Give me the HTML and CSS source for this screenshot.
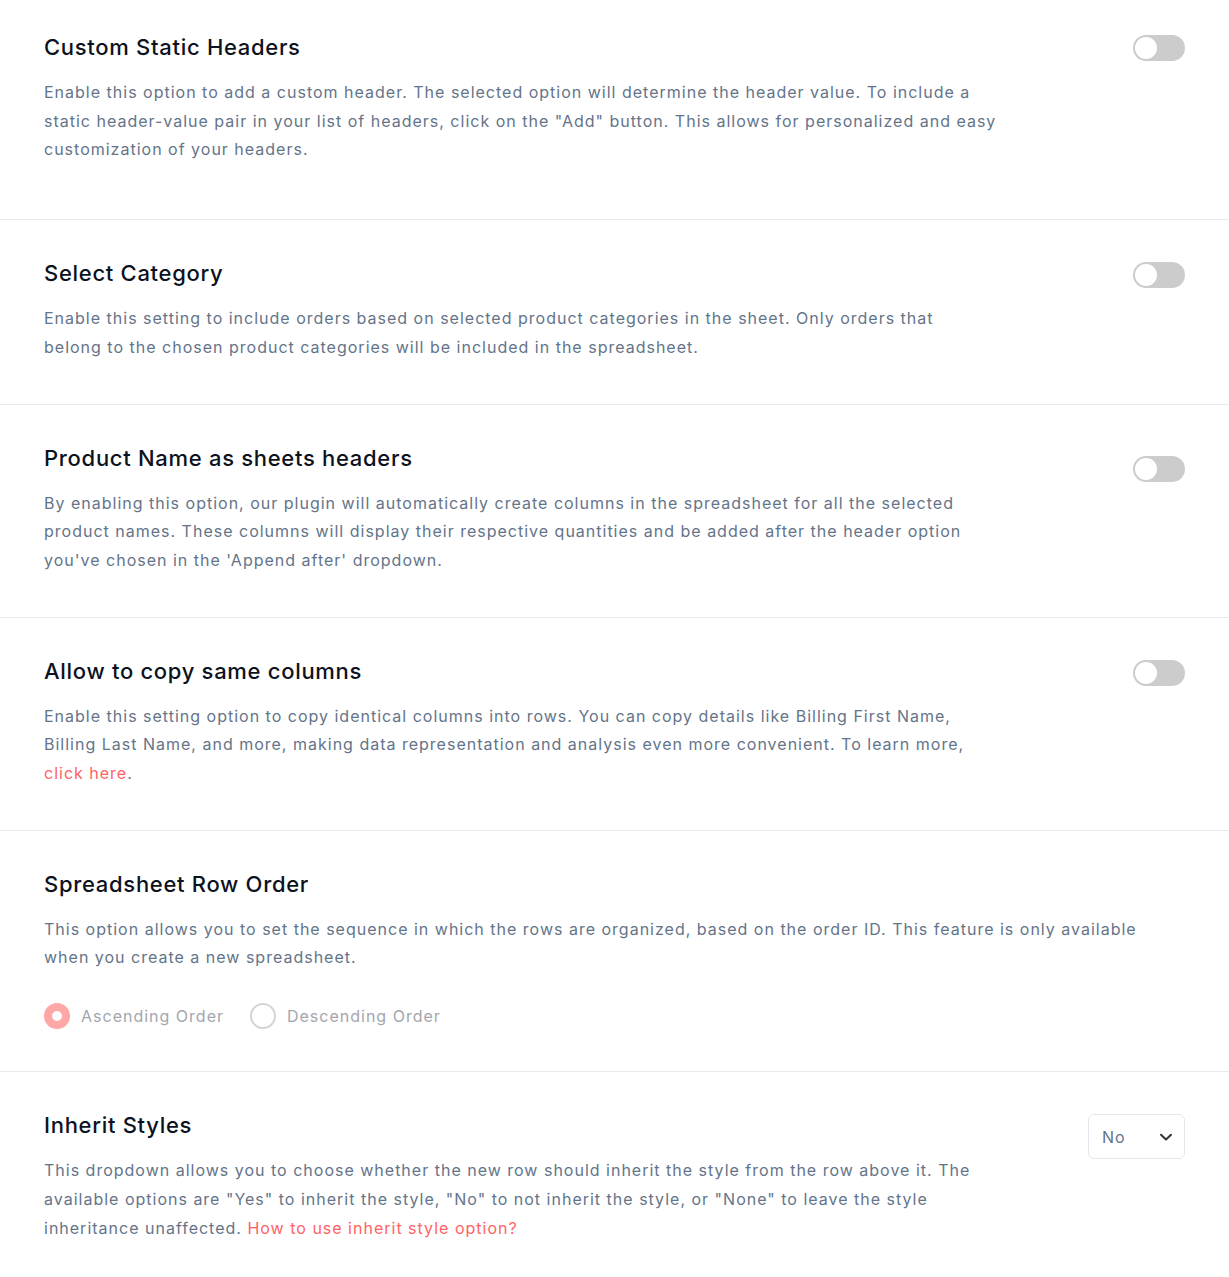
FILE: index.html
```html
<!DOCTYPE html>
<html lang="en">
<head>
    <meta charset="UTF-8">
    <meta name="viewport" content="width=device-width, initial-scale=1.0">
    <title>Settings</title>
    <link rel="stylesheet" href="styles.css">
</head>
<body>

    <div class="setting setting-first">
        <div class="setting-body">
            <h3>Custom Static Headers</h3>
            <p>Enable this option to add a custom header. The selected option will determine the header value. To include a static header-value pair in your list of headers, click on the "Add" button. This allows for personalized and easy customization of your headers.</p>
        </div>
        <label class="toggle"><input type="checkbox"><span class="slider"></span></label>
    </div>

    <div class="setting">
        <div class="setting-body narrow">
            <h3>Select Category</h3>
            <p>Enable this setting to include orders based on selected product categories in the sheet. Only orders that belong to the chosen product categories will be included in the spreadsheet.</p>
        </div>
        <label class="toggle"><input type="checkbox"><span class="slider"></span></label>
    </div>

    <div class="setting">
        <div class="setting-body">
            <h3>Product Name as sheets headers</h3>
            <p>By enabling this option, our plugin will automatically create columns in the spreadsheet for all the selected product names. These columns will display their respective quantities and be added after the header option you've chosen in the 'Append after' dropdown.</p>
        </div>
        <label class="toggle toggle-low"><input type="checkbox"><span class="slider"></span></label>
    </div>

    <div class="setting">
        <div class="setting-body">
            <h3>Allow to copy same columns</h3>
            <p>Enable this setting option to copy identical columns into rows. You can copy details like Billing First Name, Billing Last Name, and more, making data representation and analysis even more convenient. To learn more, <a href="#">click here</a>.</p>
        </div>
        <label class="toggle"><input type="checkbox"><span class="slider"></span></label>
    </div>

    <div class="setting">
        <div class="setting-body wide">
            <h3>Spreadsheet Row Order</h3>
            <p>This option allows you to set the sequence in which the rows are organized, based on the order ID. This feature is only available when you create a new spreadsheet.</p>
            <div class="radios">
                <label class="radio"><input type="radio" name="order" checked><span class="dot"></span>Ascending Order</label>
                <label class="radio"><input type="radio" name="order"><span class="dot"></span>Descending Order</label>
            </div>
        </div>
    </div>

    <div class="setting setting-last">
        <div class="setting-body">
            <h3>Inherit Styles</h3>
            <p>This dropdown allows you to choose whether the new row should inherit the style from the row above it. The available options are "Yes" to inherit the style, "No" to not inherit the style, or "None" to leave the style inheritance unaffected. <a href="#">How to use inherit style option?</a></p>
        </div>
        <div class="select">
            <span>No</span>
            <svg width="14" height="14" viewBox="0 0 14 14"><path d="M2 4.8l5 4.7 5-4.7" fill="none" stroke="#333" stroke-width="2" stroke-linecap="round" stroke-linejoin="round"/></svg>
        </div>
    </div>

</body>
</html>
```

FILE: styles.css
```css
/* Общие стили */
body {
    font-family: Inter, "Noto Sans", sans-serif;
    margin: 0;
    padding: 0;
    background: #fff;
}

.setting {
    display: flex;
    justify-content: space-between;
    align-items: flex-start;
    padding: 38px 44px 42px 44px;
    border-bottom: 1px solid #e6ebf1;
}

.setting-first {
    padding-top: 32px;
    padding-bottom: 55px;
}

.setting-last {
    border-bottom: none;
}

.setting-body {
    width: 958px;
}

.setting-body.narrow {
    width: 940px;
}

.setting-body.wide {
    width: auto;
    flex: 1;
}

.setting h3 {
    margin: 0 0 16px 0;
    font-size: 22px;
    font-weight: 500;
    line-height: 30px;
    letter-spacing: 0.7px;
    color: #0d1220;
}

.setting p {
    margin: 0;
    font-size: 16px;
    line-height: 28.7px;
    letter-spacing: 1px;
    color: #647489;
}

.setting a {
    color: #ff6363;
    text-decoration: none;
}

/* переключатель */
.toggle {
    position: relative;
    display: block;
    width: 52px;
    height: 26px;
    margin-top: 4px;
    flex-shrink: 0;
}

.setting-first .toggle {
    margin-top: 3px;
}

.toggle-low {
    margin-top: 13px;
}

.toggle input {
    display: none;
}

.slider {
    position: absolute;
    inset: 0;
    background: #cccccc;
    border-radius: 13px;
    cursor: pointer;
}

.slider::before {
    content: "";
    position: absolute;
    left: 2px;
    top: 2px;
    width: 22px;
    height: 22px;
    border-radius: 50%;
    background: #fff;
}

/* радио */
.radios {
    display: flex;
    gap: 26px;
    margin-top: 31px;
}

.radio {
    display: flex;
    align-items: center;
    gap: 11px;
    font-size: 16px;
    letter-spacing: 1px;
    line-height: 26px;
    color: #a3a6ad;
    cursor: pointer;
}

.radio input {
    display: none;
}

.radio .dot {
    width: 26px;
    height: 26px;
    box-sizing: border-box;
    border-radius: 50%;
    border: 2px solid #d4d4d4;
    background: #fff;
}

.radio input:checked + .dot {
    border: 8px solid #ffa6a6;
}

.select {
    display: flex;
    align-items: center;
    justify-content: space-between;
    box-sizing: border-box;
    width: 97px;
    height: 45px;
    margin-top: 4px;
    padding: 0 11px 0 13px;
    border: 1px solid #e3e8ef;
    border-radius: 6px;
    font-size: 16px;
    letter-spacing: 1px;
    color: #647489;
}
```
